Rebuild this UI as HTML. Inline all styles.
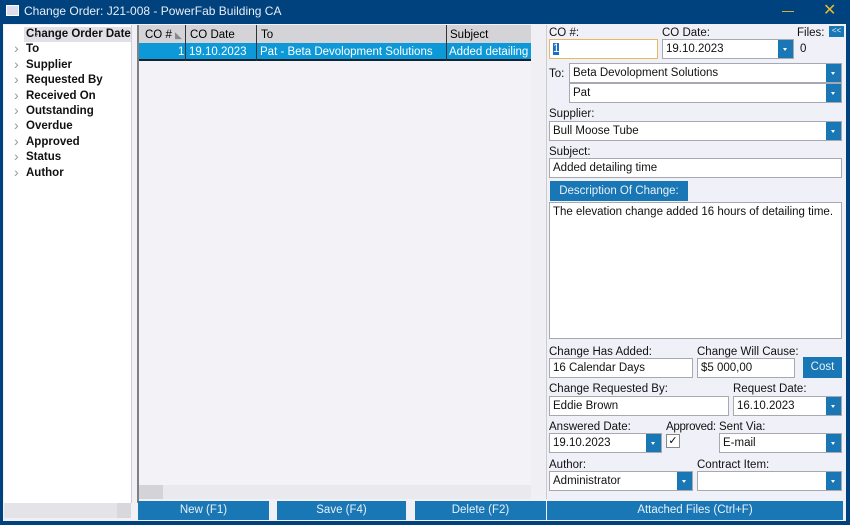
<!DOCTYPE html>
<html><head><style>
*{box-sizing:border-box;margin:0;padding:0}
body{width:850px;height:525px;background:#00427d;font-family:"Liberation Sans",sans-serif;font-size:11.5px;line-height:14px;position:relative;overflow:hidden}
.a{position:absolute;white-space:nowrap}
.lbl{position:absolute;color:#111;font-size:11.5px;white-space:nowrap;margin-top:1px}
.inp{position:absolute;background:#fff;border:1px solid #a8a8b0;height:20px;padding:2px 3px;line-height:15px;font-size:11.5px;color:#111;white-space:nowrap;overflow:hidden}
.dd{position:absolute;right:0;top:0;bottom:0;width:15px;background:#1a77b5}
.dd:after{content:"";position:absolute;left:5px;top:8px;border:2.5px solid transparent;border-top:3px solid #fff}
.btn{position:absolute;background:#1a77b5;color:#e8f0f8;text-align:center;font-size:11.5px;line-height:19px;white-space:nowrap}
.tree div{height:15.4px;line-height:15px;font-weight:bold;color:#111;padding-left:22px;position:relative;font-size:11.5px;white-space:nowrap}
.tree div:before{content:"›";position:absolute;left:10px;top:-1px;color:#999;font-weight:normal;font-size:14px}
</style></head><body>
<div class="a" style="left:6px;top:5px;width:13px;height:11px;background:#dde;border:1px solid #fff"></div>
<div class="a" style="left:24px;top:4px;color:#e8eef6;font-size:12px">Change Order: J21-008 - PowerFab Building CA</div>
<div class="a" style="left:782px;top:11px;width:12px;height:1px;background:#d8b030"></div>
<div class="a" style="left:823px;top:1px;color:#e8b830;font-size:16px;line-height:20px">✕</div>
<div class="a" style="left:3px;top:24px;width:843px;height:497px;background:#f0f0f6"></div>
<div class="a tree" style="left:4px;top:25px;width:127px;height:478px;background:#fff;padding-top:2px;overflow:hidden">
<div style="background:#e0e0e6;margin-left:20px;padding-left:2px">Change Order Date</div>
<div>To</div><div>Supplier</div><div>Requested By</div><div>Received On</div><div>Outstanding</div><div>Overdue</div><div>Approved</div><div>Status</div><div>Author</div>
</div>
<div class="a" style="left:4px;top:503px;width:127px;height:15px;background:#e4e4e8"></div>
<div class="a" style="left:117px;top:503px;width:14px;height:15px;background:#d8d8dc"></div>
<div class="a" style="left:131px;top:25px;width:6px;height:478px;background:#f0f0f6;border-left:1px solid #d0d0d4"></div>
<div class="a" style="left:137px;top:25px;width:2px;height:478px;background:#808080"></div>
<div class="a" style="left:139px;top:25px;width:392px;height:460px;background:#f3f3f7"></div>
<div class="a" style="left:139px;top:25px;width:392px;height:18px;background:#d4d4d8"></div>
<div class="a" style="left:139px;top:43px;width:392px;height:18px;background:#0d98d8;border-bottom:2px solid #123"></div>
<div class="a" style="left:145px;top:28px">CO # <span style="color:#888;font-size:9px">◣</span></div>
<div class="a" style="left:190px;top:28px">CO Date</div>
<div class="a" style="left:261px;top:28px">To</div>
<div class="a" style="left:450px;top:28px">Subject</div>
<div class="a" style="left:185px;top:25px;width:1px;height:36px;background:#333"></div>
<div class="a" style="left:256px;top:25px;width:1px;height:36px;background:#333"></div>
<div class="a" style="left:446px;top:25px;width:1px;height:36px;background:#333"></div>
<div class="a" style="left:178px;top:45px;color:#fff">1</div>
<div class="a" style="left:189px;top:45px;color:#fff">19.10.2023</div>
<div class="a" style="left:260px;top:45px;color:#fff">Pat - Beta Devolopment Solutions</div>
<div class="a" style="left:449px;top:45px;color:#fff;width:82px;overflow:hidden">Added detailing time</div>
<div class="a" style="left:531px;top:25px;width:14px;height:470px;background:#f0f0f4"></div>
<div class="a" style="left:139px;top:485px;width:392px;height:14px;background:#eaeaee"></div>
<div class="a" style="left:139px;top:485px;width:24px;height:14px;background:#d4d4d8"></div>
<div class="btn" style="left:138px;top:501px;width:131px">New (F1)</div>
<div class="btn" style="left:277px;top:501px;width:129px">Save (F4)</div>
<div class="btn" style="left:415px;top:501px;width:131px">Delete (F2)</div>
<div class="btn" style="left:547px;top:501px;width:296px">Attached Files (Ctrl+F)</div>
<div class="a" style="left:546px;top:25px;width:300px;height:474px;background:#f0f0f8;border-left:1px solid #ccc"></div>
<div class="lbl" style="left:549px;top:25px">CO #:</div>
<div class="lbl" style="left:662px;top:25px">CO Date:</div>
<div class="lbl" style="left:797px;top:25px">Files:</div>
<div class="btn" style="left:829px;top:26px;width:15px;height:11px;line-height:10px;font-size:8px">&lt;&lt;</div>
<div class="inp" style="left:549px;top:39px;width:109px;border-color:#e8b860"><span style="background:#1a6fc0;color:#fff">1</span></div>
<div class="inp" style="left:662px;top:39px;width:132px">19.10.2023<span class="dd"></span></div>
<div class="lbl" style="left:800px;top:41px">0</div>
<div class="lbl" style="left:549px;top:66px">To:</div>
<div class="inp" style="left:569px;top:63px;width:273px">Beta Devolopment Solutions<span class="dd"></span></div>
<div class="inp" style="left:569px;top:83px;width:273px">Pat<span class="dd"></span></div>
<div class="lbl" style="left:549px;top:106px">Supplier:</div>
<div class="inp" style="left:549px;top:121px;width:293px">Bull Moose Tube<span class="dd"></span></div>
<div class="lbl" style="left:549px;top:144px">Subject:</div>
<div class="inp" style="left:549px;top:158px;width:293px">Added detailing time</div>
<div class="btn" style="left:550px;top:181px;width:138px;line-height:20px">Description Of Change:</div>
<div class="inp" style="left:549px;top:202px;width:293px;height:137px">The elevation change added 16 hours of detailing time.</div>
<div class="lbl" style="left:549px;top:344px">Change Has Added:</div>
<div class="lbl" style="left:697px;top:344px">Change Will Cause:</div>
<div class="inp" style="left:549px;top:358px;width:144px">16 Calendar Days</div>
<div class="inp" style="left:697px;top:358px;width:98px">$5 000,00</div>
<div class="btn" style="left:803px;top:357px;width:39px;height:21px;line-height:21px">Cost</div>
<div class="lbl" style="left:549px;top:381px">Change Requested By:</div>
<div class="lbl" style="left:733px;top:381px">Request Date:</div>
<div class="inp" style="left:549px;top:396px;width:180px">Eddie Brown</div>
<div class="inp" style="left:733px;top:396px;width:109px">16.10.2023<span class="dd"></span></div>
<div class="lbl" style="left:549px;top:419px">Answered Date:</div>
<div class="lbl" style="left:666px;top:419px;letter-spacing:-0.3px">Approved:</div>
<div class="lbl" style="left:719px;top:419px">Sent Via:</div>
<div class="inp" style="left:549px;top:433px;width:113px">19.10.2023<span class="dd"></span></div>
<div class="a" style="left:666px;top:434px;width:14px;height:14px;border:1px solid #888;background:#fff;font-size:11px;line-height:12px;text-align:center">✓</div>
<div class="inp" style="left:719px;top:433px;width:123px">E-mail<span class="dd"></span></div>
<div class="lbl" style="left:549px;top:457px">Author:</div>
<div class="lbl" style="left:697px;top:457px">Contract Item:</div>
<div class="inp" style="left:549px;top:471px;width:144px">Administrator<span class="dd"></span></div>
<div class="inp" style="left:697px;top:471px;width:145px"><span class="dd"></span></div>
</body></html>
